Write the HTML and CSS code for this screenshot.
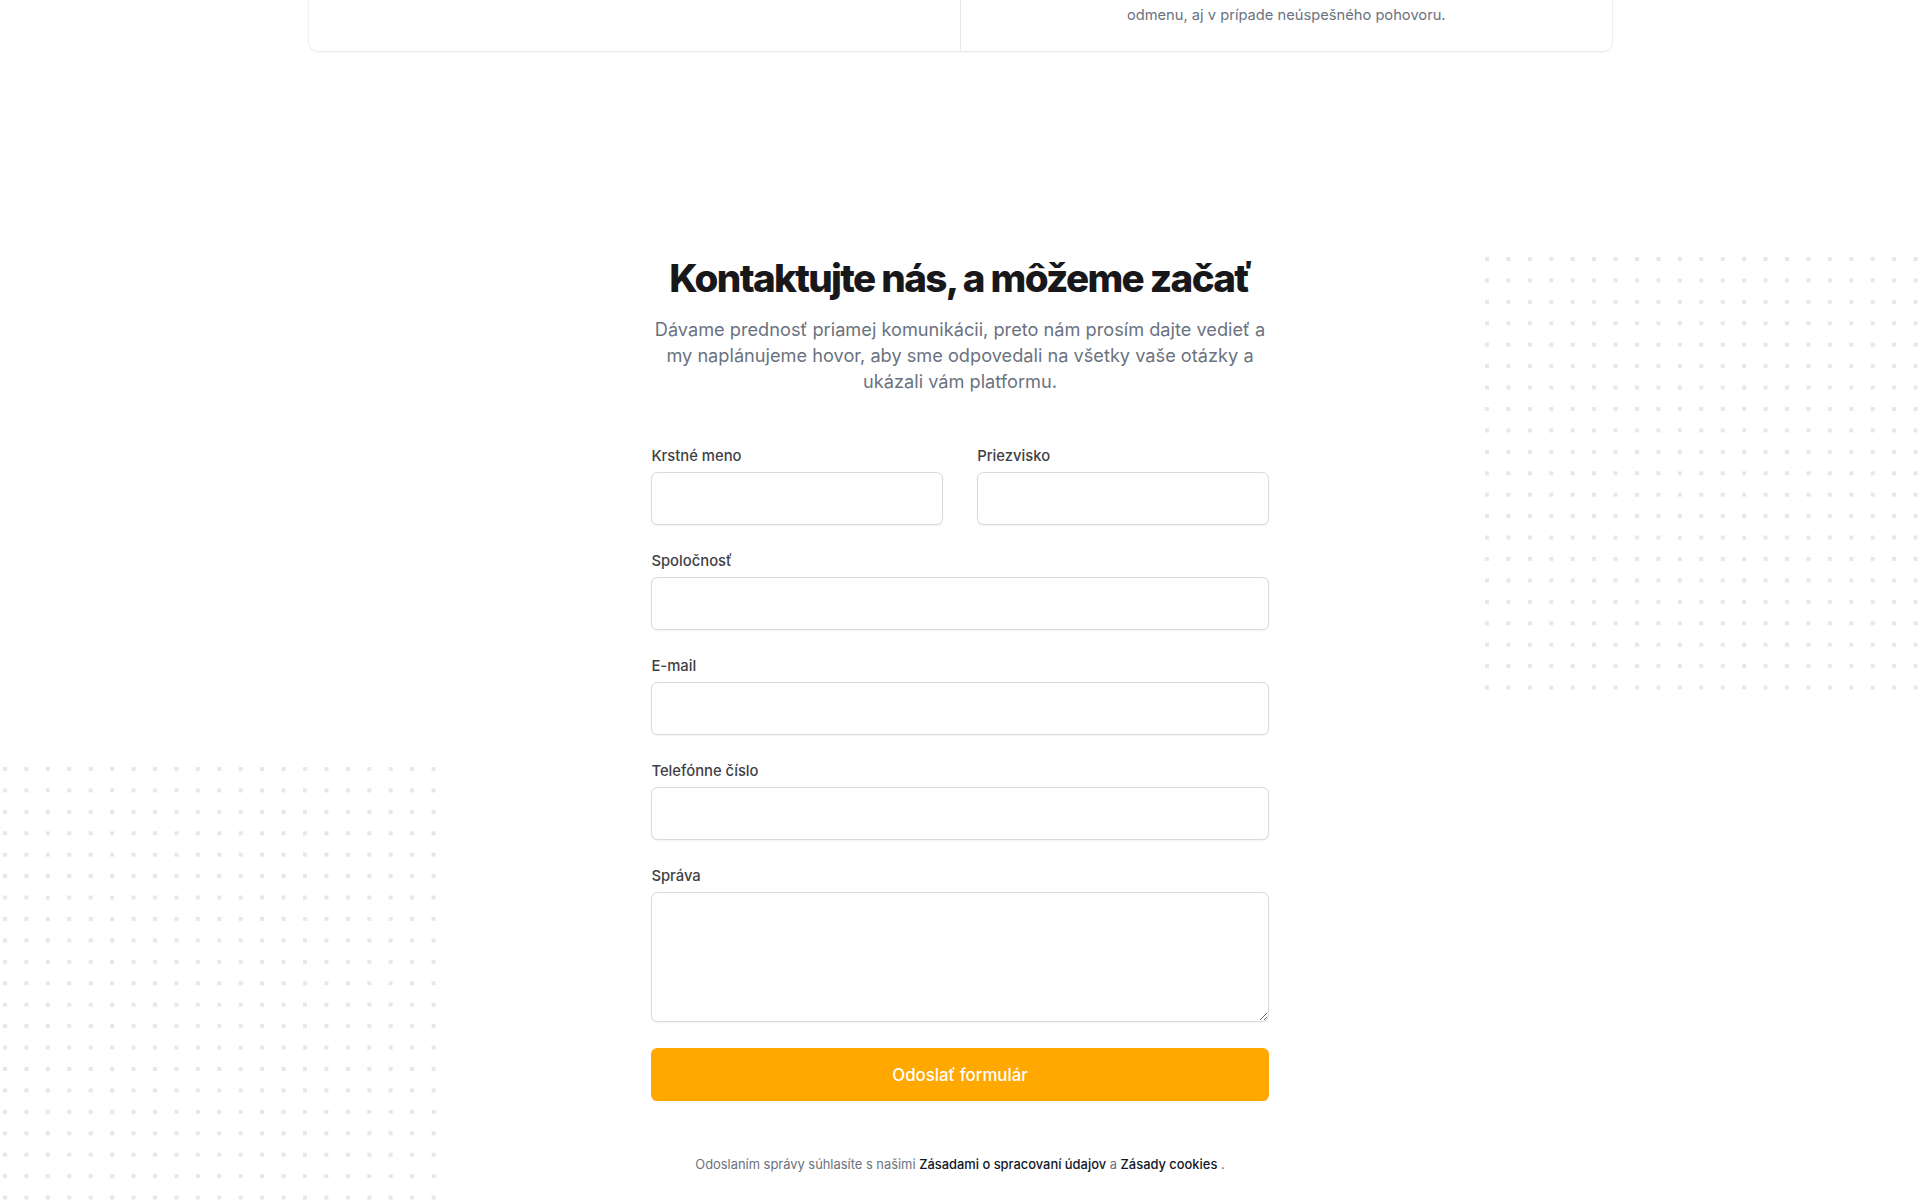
FILE: index.html
```html
<!DOCTYPE html>
<html lang="sk">
<head>
<meta charset="utf-8">
<title>Kontakt</title>
<link rel="stylesheet" href="styles.css">
</head>
<body>
<div class="page">
  <div class="cards-wrap">
    <div class="cards">
      <div class="card-col">
        <p>ktoré si vyberiete, aby ste sa pripravili na pohovor.</p>
      </div>
      <div class="card-col">
        <p>Ak sa kandidát zúčastní pohovoru, vyplatíme mu vždy</p>
        <p>odmenu, aj v prípade neúspešného pohovoru.</p>
      </div>
    </div>
  </div>

  <section class="contact">
    <svg class="dots dots-right" width="433" height="433" aria-hidden="true">
      <defs>
        <pattern id="dp1" x="0" y="0" width="21.43" height="21.43" patternUnits="userSpaceOnUse">
          <rect x="0" y="0" width="4" height="4" fill="#e5e7eb"/>
        </pattern>
      </defs>
      <rect width="433" height="433" fill="url(#dp1)"/>
    </svg>
    <svg class="dots dots-left" width="433" height="433" aria-hidden="true">
      <defs>
        <pattern id="dp2" x="0" y="0" width="21.43" height="21.43" patternUnits="userSpaceOnUse">
          <rect x="0" y="0" width="4" height="4" fill="#e5e7eb"/>
        </pattern>
      </defs>
      <rect width="433" height="433" fill="url(#dp2)"/>
    </svg>

    <div class="contact-inner">
      <h2 class="title">Kontaktujte nás, a môžeme začať</h2>
      <p class="lead">Dávame prednosť priamej komunikácii, preto nám prosím dajte vedieť a<br>my naplánujeme hovor, aby sme odpovedali na všetky vaše otázky a<br>ukázali vám platformu.</p>

      <form class="form" onsubmit="return false;">
        <div class="field">
          <label for="fn">Krstné meno</label>
          <input id="fn" type="text">
        </div>
        <div class="field">
          <label for="ln">Priezvisko</label>
          <input id="ln" type="text">
        </div>
        <div class="field full">
          <label for="co">Spoločnosť</label>
          <input id="co" type="text">
        </div>
        <div class="field full">
          <label for="em">E-mail</label>
          <input id="em" type="email">
        </div>
        <div class="field full">
          <label for="ph">Telefónne číslo</label>
          <input id="ph" type="text">
        </div>
        <div class="field full">
          <label for="ms">Správa</label>
          <textarea id="ms" rows="4"></textarea>
        </div>
        <div class="full">
          <button type="submit" class="submit">Odoslať formulár</button>
        </div>
      </form>

      <p class="legal">Odoslaním správy súhlasíte s našimi <a href="#">Zásadami o spracovaní údajov</a> a <a href="#">Zásady cookies</a> .</p>
    </div>
  </section>
</div>
</body>
</html>
```

FILE: styles.css
```css
* { box-sizing: border-box; }

html, body {
  margin: 0;
  padding: 0;
  background: #ffffff;
}

body {
  font-family: Inter, "Noto Sans", "Liberation Sans", sans-serif;
  color: #111827;
  overflow: hidden;
  height: 1200px;
}

.page {
  position: relative;
  min-height: 1200px;
}

/* top card remnant */
.cards-wrap {
  width: 1303px;
  margin: -48.3px auto 0;
}

.cards {
  display: grid;
  grid-template-columns: 1fr 1fr;
  background: #fff;
  border-radius: 9px;
  box-shadow: 0 1px 3px rgba(0, 0, 0, 0.08), 0 0 0 1px rgba(0, 0, 0, 0.03);
}

.card-col {
  padding: 25.7px 25.7px 22.6px;
  text-align: center;
}

.card-col + .card-col {
  border-left: 1px solid #e5e7eb;
}

.card-col p {
  margin: 0;
  font-size: 14.7px;
  line-height: 25.7px;
  color: #6b7280;
}

/* contact section */
.contact {
  position: relative;
  padding-top: 206px;
}

.dots {
  position: absolute;
  display: block;
  pointer-events: none;
}

.dots-right {
  left: 1485px;
  top: 206px;
}

.dots-left {
  left: 2.5px;
  top: 716px;
}

.contact-inner {
  position: relative;
  width: 617.2px;
  margin: 0 auto;
}

.title {
  margin: 0;
  text-align: center;
  font-size: 38.6px;
  line-height: 42.9px;
  font-weight: 800;
  letter-spacing: -0.043em;
  color: #18181b;
}

.lead {
  margin: 15.6px 0 0;
  text-align: center;
  font-size: 18.2px;
  line-height: 26px;
  color: #6b7280;
  white-space: nowrap;
}

.form {
  margin-top: 52px;
  display: grid;
  grid-template-columns: 1fr 1fr;
  column-gap: 34.3px;
  row-gap: 25.7px;
}

.full {
  grid-column: 1 / -1;
}

.field {
  display: flex;
  flex-direction: column;
  gap: 4.3px;
}

.field label {
  font-size: 14.8px;
  line-height: 21.4px;
  font-weight: 500;
  color: #3f3f46;
}

.field input,
.field textarea {
  display: block;
  width: 100%;
  font-family: inherit;
  font-size: 17px;
  line-height: 25.7px;
  padding: 12.85px 17px;
  border: 1px solid #d9d9de;
  border-radius: 6.4px;
  background: #fff;
  box-shadow: 0 1px 2px rgba(0, 0, 0, 0.05);
  color: #111827;
  outline: none;
}

.field input {
  height: 53.6px;
}

.field textarea {
  height: 130.5px;
  resize: vertical;
}

.submit {
  display: block;
  width: 100%;
  height: 53.6px;
  border: 0;
  border-radius: 6.4px;
  background: #ffa800;
  color: #ffffff;
  font-family: inherit;
  font-size: 16.8px;
  font-weight: 500;
  cursor: pointer;
  box-shadow: 0 1px 2px rgba(0, 0, 0, 0.05);
}

.legal {
  margin: 53.5px 0 0;
  text-align: center;
  font-size: 12.9px;
  line-height: 20px;
  color: #6b7280;
  white-space: nowrap;
}

.legal a {
  color: #111827;
  font-weight: 500;
  text-decoration: none;
}
```
